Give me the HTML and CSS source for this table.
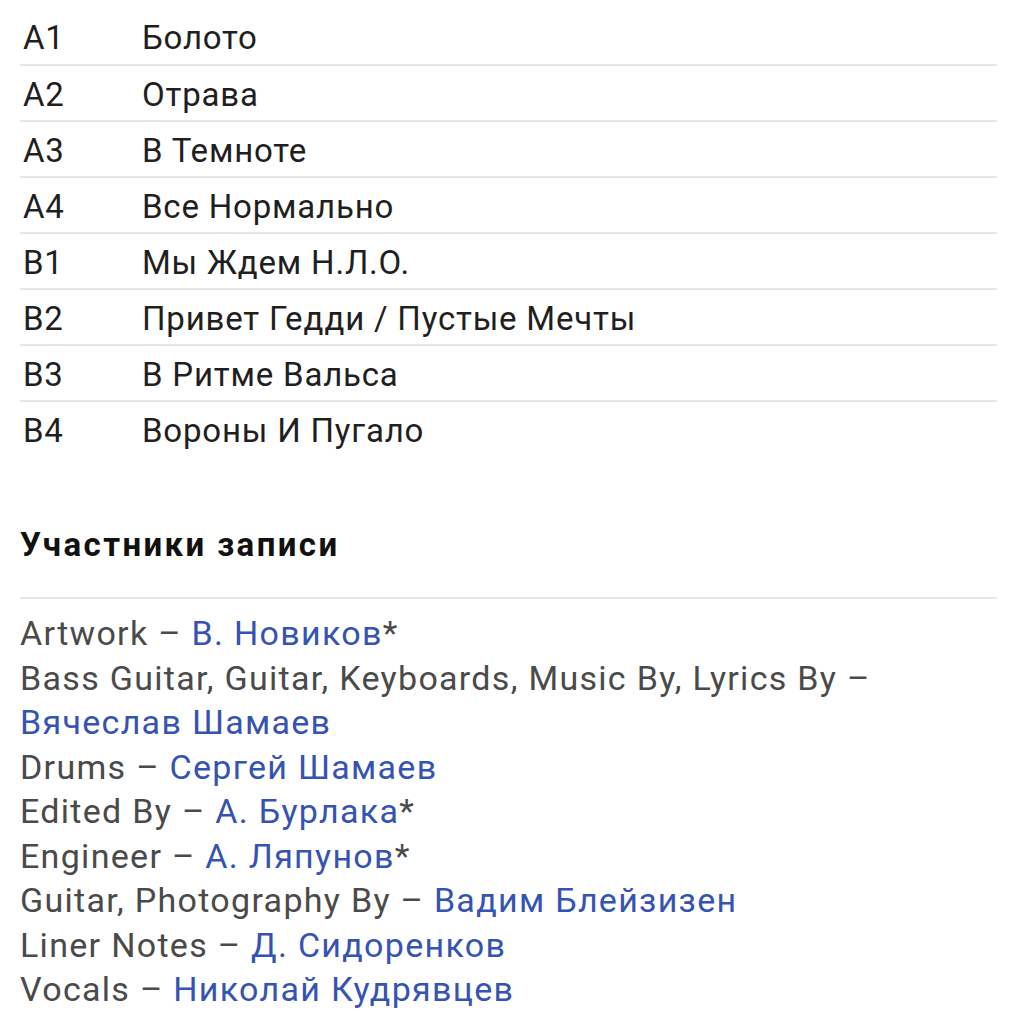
FILE: index.html
```html
<!DOCTYPE html>
<html lang="ru">
<head>
    <meta charset="UTF-8">
    <meta name="viewport" content="width=device-width, initial-scale=1.0">
    <title>Треклист</title>
    <link rel="stylesheet" href="styles.css">
</head>
<body>
    <div class="page">
        <table class="tracklist">
            <tr><td class="pos">A1</td><td class="title">Болото</td></tr>
            <tr><td class="pos">A2</td><td class="title">Отрава</td></tr>
            <tr><td class="pos">A3</td><td class="title">В Темноте</td></tr>
            <tr><td class="pos">A4</td><td class="title">Все Нормально</td></tr>
            <tr><td class="pos">B1</td><td class="title">Мы Ждем Н.Л.О.</td></tr>
            <tr><td class="pos">B2</td><td class="title">Привет Гедди / Пустые Мечты</td></tr>
            <tr><td class="pos">B3</td><td class="title">В Ритме Вальса</td></tr>
            <tr><td class="pos">B4</td><td class="title">Вороны И Пугало</td></tr>
        </table>

        <h2 class="section-title">Участники записи</h2>

        <ul class="credits">
            <li>Artwork – <a href="#">В. Новиков</a>*</li>
            <li>Bass Guitar, Guitar, Keyboards, Music By, Lyrics By – <a href="#">Вячеслав Шамаев</a></li>
            <li>Drums – <a href="#">Сергей Шамаев</a></li>
            <li>Edited By – <a href="#">А. Бурлака</a>*</li>
            <li>Engineer – <a href="#">А. Ляпунов</a>*</li>
            <li>Guitar, Photography By – <a href="#">Вадим Блейзизен</a></li>
            <li>Liner Notes – <a href="#">Д. Сидоренков</a></li>
            <li>Vocals – <a href="#">Николай Кудрявцев</a></li>
        </ul>
    </div>
</body>
</html>
```

FILE: styles.css
```css
* {
    margin: 0;
    padding: 0;
    box-sizing: border-box;
}

body {
    font-family: Roboto, 'Noto Sans', sans-serif;
    background: #ffffff;
    color: #1f1f1f;
}

.page {
    padding: 9px 18px 0 20px;
}

.tracklist {
    width: 100%;
    border-collapse: collapse;
    font-size: 33px;
    letter-spacing: 0.8px;
}

.tracklist tr {
    height: 56px;
    border-bottom: 2px solid #e6e6e6;
}

.tracklist tr:last-child {
    border-bottom: none;
}

.tracklist td {
    vertical-align: middle;
    padding-top: 2px;
}

.pos {
    width: 122px;
    padding-left: 3px;
}

.section-title {
    font-size: 33px;
    font-weight: 700;
    letter-spacing: 2.4px;
    color: #111;
    margin-top: 68px;
    padding-bottom: 33px;
    border-bottom: 2px solid #e6e6e6;
}

.credits {
    list-style: none;
    padding-top: 12px;
    font-size: 34px;
    line-height: 44.5px;
    letter-spacing: 1.3px;
    color: #4a4a4a;
}

.credits a {
    color: #3553b3;
    text-decoration: none;
}
```
